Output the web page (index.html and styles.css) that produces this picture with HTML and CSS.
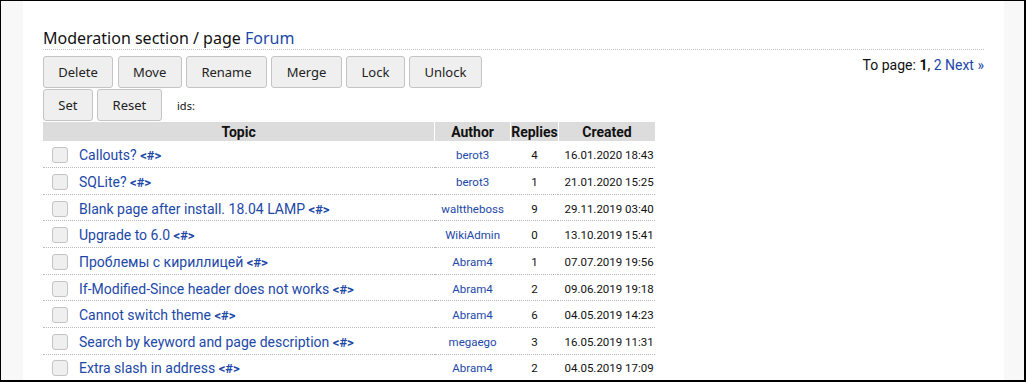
FILE: index.html
```html
<!DOCTYPE html>
<html>
  <head>
    <title>Moderation - Forum</title>
    <meta name="viewport" content="width=device-width, initial-scale=1.0">
    <link rel="stylesheet" href="styles.css">
  </head>
  <body>
    <div class="frame">
      <div class="page">
        <div class="content">
          <h2 class="title">Moderation section / page <a href="#">Forum</a></h2>
          <div class="pager">To page: <b>1</b>, <a href="#">2</a> <a href="#">Next &raquo;</a></div>
          <form class="actions">
            <div class="btn-row">
              <button type="button">Delete</button>
              <button type="button">Move</button>
              <button type="button">Rename</button>
              <button type="button">Merge</button>
              <button type="button">Lock</button>
              <button type="button">Unlock</button>
            </div>
            <div class="btn-row">
              <button type="button">Set</button>
              <button type="button">Reset</button>
              <span class="ids">ids:</span>
            </div>
          </form>
          <table class="topics">
            <thead>
              <tr>
                <th class="col-topic">Topic</th>
                <th class="col-author">Author</th>
                <th class="col-replies">Replies</th>
                <th class="col-created">Created</th>
              </tr>
            </thead>
            <tbody>
              <tr>
                <td class="topic"><input type="checkbox"><a href="#">Callouts?</a> <a class="anchor" href="#">&lt;#&gt;</a></td>
                <td class="author"><a href="#">berot3</a></td>
                <td class="replies">4</td>
                <td class="created">16.01.2020 18:43</td>
              </tr>
              <tr>
                <td class="topic"><input type="checkbox"><a href="#">SQLite?</a> <a class="anchor" href="#">&lt;#&gt;</a></td>
                <td class="author"><a href="#">berot3</a></td>
                <td class="replies">1</td>
                <td class="created">21.01.2020 15:25</td>
              </tr>
              <tr>
                <td class="topic"><input type="checkbox"><a href="#">Blank page after install. 18.04 LAMP</a> <a class="anchor" href="#">&lt;#&gt;</a></td>
                <td class="author"><a href="#">walttheboss</a></td>
                <td class="replies">9</td>
                <td class="created">29.11.2019 03:40</td>
              </tr>
              <tr>
                <td class="topic"><input type="checkbox"><a href="#">Upgrade to 6.0</a> <a class="anchor" href="#">&lt;#&gt;</a></td>
                <td class="author"><a href="#">WikiAdmin</a></td>
                <td class="replies">0</td>
                <td class="created">13.10.2019 15:41</td>
              </tr>
              <tr>
                <td class="topic"><input type="checkbox"><a href="#">Проблемы с кириллицей</a> <a class="anchor" href="#">&lt;#&gt;</a></td>
                <td class="author"><a href="#">Abram4</a></td>
                <td class="replies">1</td>
                <td class="created">07.07.2019 19:56</td>
              </tr>
              <tr>
                <td class="topic"><input type="checkbox"><a href="#">If-Modified-Since header does not works</a> <a class="anchor" href="#">&lt;#&gt;</a></td>
                <td class="author"><a href="#">Abram4</a></td>
                <td class="replies">2</td>
                <td class="created">09.06.2019 19:18</td>
              </tr>
              <tr>
                <td class="topic"><input type="checkbox"><a href="#">Cannot switch theme</a> <a class="anchor" href="#">&lt;#&gt;</a></td>
                <td class="author"><a href="#">Abram4</a></td>
                <td class="replies">6</td>
                <td class="created">04.05.2019 14:23</td>
              </tr>
              <tr>
                <td class="topic"><input type="checkbox"><a href="#">Search by keyword and page description</a> <a class="anchor" href="#">&lt;#&gt;</a></td>
                <td class="author"><a href="#">megaego</a></td>
                <td class="replies">3</td>
                <td class="created">16.05.2019 11:31</td>
              </tr>
              <tr>
                <td class="topic"><input type="checkbox"><a href="#">Extra slash in address</a> <a class="anchor" href="#">&lt;#&gt;</a></td>
                <td class="author"><a href="#">Abram4</a></td>
                <td class="replies">2</td>
                <td class="created">04.05.2019 17:09</td>
              </tr>
            </tbody>
          </table>
        </div>
      </div>
    </div>
  </body>
</html>
```

FILE: styles.css
```css
html, body {
  margin: 0;
  padding: 0;
  background: #fff;
}
body {
  font-family: Roboto, "Noto Sans", sans-serif;
  color: #111;
}
a {
  color: #1c48a8;
  text-decoration: none;
}
.frame {
  box-sizing: border-box;
  height: 382px;
  border: 1px solid #000;
  border-right-width: 2px;
  border-bottom-width: 2px;
  overflow: hidden;
}
.page {
  background: #f8f8f8;
  padding: 0 20px 0 22px;
  height: 100%;
}
.content {
  background: #fff;
  height: 100%;
  padding: 27px 20px 0 20px;
  box-sizing: border-box;
}
.title {
  font-family: "Noto Sans", sans-serif;
  font-weight: normal;
  font-size: 16px;
  line-height: 21px;
  margin: 0 0 6px 0;
  padding-bottom: 0;
  border-bottom: 1px dotted #c4c4c4;
}
.pager {
  float: right;
  font-size: 14px;
  margin-top: 1px;
}
.actions {
  margin: 0;
}
.btn-row {
  display: flex;
  align-items: center;
  gap: 4.5px;
  margin-bottom: 1px;
}
.btn-row button {
  font-family: "Noto Sans", sans-serif;
  font-size: 13px;
  color: #222;
  height: 32px;
  padding: 0 14.3px;
  background: #efefef;
  border: 1px solid #c4c4c4;
  border-radius: 3px;
}
.ids {
  font-family: "Noto Sans", sans-serif;
  font-size: 11px;
  margin-left: 11px;
}
.topics {
  border-collapse: collapse;
  width: 612px;
}
.topics th {
  background: #dcdcdc;
  font-size: 14px;
  font-weight: bold;
  height: 19px;
  padding: 0;
  border-left: 1px solid #fff;
}
.topics th:first-child {
  border-left: none;
}
.col-topic { width: 392px; }
.col-author { width: 75px; }
.col-replies { width: 47px; }
.col-created { width: 96px; }
.topics td {
  height: 26.65px;
  padding: 2px 0 0 0;
  border-bottom: 1px dotted #b8b8b8;
  font-size: 11.5px;
  white-space: nowrap;
  box-sizing: border-box;
}
.topics td.topic {
  font-size: 14px;
  padding-left: 9px;
}
.topic input {
  appearance: none;
  width: 16px;
  height: 16px;
  margin: 0 11px 0 0;
  vertical-align: -3px;
  background: #efefef;
  border: 1px solid #c4c4c4;
  border-radius: 3px;
}
.topic .anchor {
  font-size: 13px;
  font-weight: bold;
}
.author, .replies {
  text-align: center;
}
.topics td.created {
  padding-left: 6px;
}
```
